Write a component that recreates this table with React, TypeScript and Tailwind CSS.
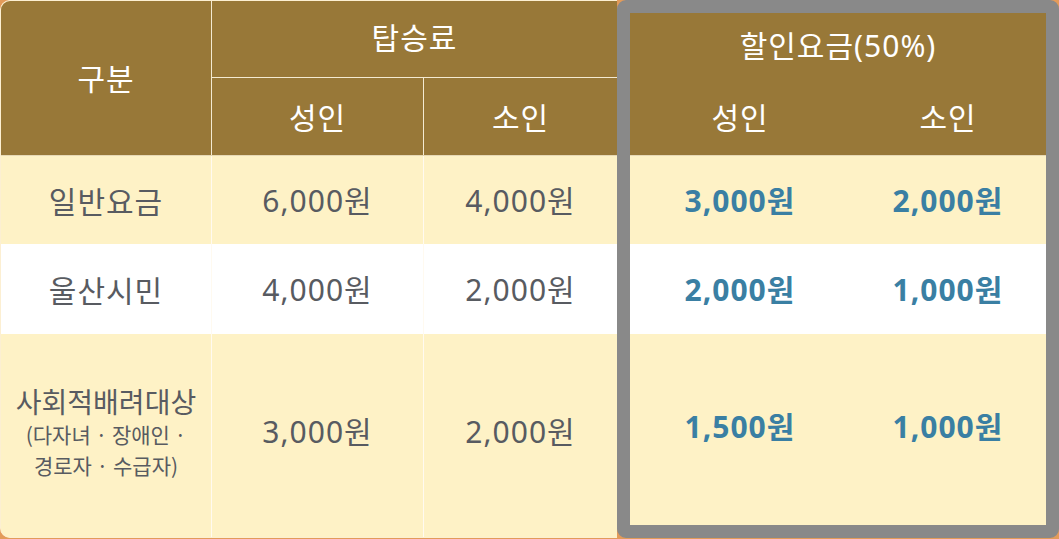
import React from "react";

const font = { fontFamily: '"Noto Sans CJK KR", "Noto Sans", sans-serif' };
const num = { fontFamily: '"Noto Sans", "Noto Sans CJK KR", sans-serif' };

export default function App() {
  return (
    <div className="w-[1059px] h-[539px] bg-[#e39b5a] flex" style={font}>
      {/* left part */}
      <div className="w-[617px] h-[538px] flex flex-col rounded-tl-[10px] rounded-bl-[10px] overflow-hidden border-l border-t border-b border-[#fcefd2] bg-[#fef2c6]">
        {/* header */}
        <div className="flex h-[155px] bg-[#987838] text-white text-[30px] tracking-[1px] border-b border-[#e7d9b5]">
          <div className="w-[211px] border-r border-[#f4ead2] flex items-center justify-center pb-[2px]">구분</div>
          <div className="flex-1 flex flex-col">
            <div className="h-[77px] border-b border-[#f4ead2] flex items-center justify-center pb-[6px]">탑승료</div>
            <div className="flex-1 flex">
              <div className="w-[212px] border-r border-[#f4ead2] flex items-center justify-center">성인</div>
              <div className="flex-1 flex items-center justify-center">소인</div>
            </div>
          </div>
        </div>
        {/* rows */}
        <div className="flex h-[88px] bg-[#fef2c6] text-[#585b61] text-[30px] tracking-[1px]">
          <div className="w-[211px] border-r border-[#fffaf0] flex items-center justify-center">일반요금</div>
          <div className="w-[212px] border-r border-[#fffaf0] flex items-center justify-center" style={num}>6,000원</div>
          <div className="flex-1 flex items-center justify-center" style={num}>4,000원</div>
        </div>
        <div className="flex h-[90px] bg-white text-[#585b61] text-[30px] tracking-[1px]">
          <div className="w-[211px] border-r border-[#fffaf0] flex items-center justify-center">울산시민</div>
          <div className="w-[212px] border-r border-[#fffaf0] flex items-center justify-center" style={num}>4,000원</div>
          <div className="flex-1 flex items-center justify-center" style={num}>2,000원</div>
        </div>
        <div className="flex flex-1 bg-[#fef2c6] text-[#585b61] text-[30px] tracking-[1px]">
          <div className="w-[211px] border-r border-[#fffaf0] flex flex-col items-center justify-center pb-[8px] tracking-normal">
            <div className="text-[28px] leading-[35px]">사회적배려대상</div>
            <div className="text-[21px] leading-[31px]">(다자녀 · 장애인 ·</div>
            <div className="text-[21px] leading-[30px]">경로자 · 수급자)</div>
          </div>
          <div className="w-[212px] border-r border-[#fffaf0] flex items-center justify-center pb-[8px]" style={num}>3,000원</div>
          <div className="flex-1 flex items-center justify-center pb-[8px]" style={num}>2,000원</div>
        </div>
      </div>
      {/* right highlighted part */}
      <div className="w-[442px] h-[538px] border-[13px] border-[#898989] rounded-[9px] flex flex-col overflow-hidden bg-[#fef2c6]">
        <div className="h-[143px] bg-[#987838] text-white text-[30px] tracking-[1px] border-b border-[#e7d9b5] flex flex-col">
          <div className="h-[64px] flex items-center justify-center" style={num}>할인요금(50%)</div>
          <div className="flex-1 flex">
            <div className="w-[220px] flex items-center justify-center">성인</div>
            <div className="flex-1 flex items-center justify-center">소인</div>
          </div>
        </div>
        <div className="flex h-[88px] bg-[#fef2c6] text-[#3a7fa3] font-bold text-[30px] tracking-[1px]" style={num}>
          <div className="w-[220px] flex items-center justify-center">3,000원</div>
          <div className="flex-1 flex items-center justify-center">2,000원</div>
        </div>
        <div className="flex h-[90px] bg-white text-[#3a7fa3] font-bold text-[30px] tracking-[1px]" style={num}>
          <div className="w-[220px] flex items-center justify-center">2,000원</div>
          <div className="flex-1 flex items-center justify-center">1,000원</div>
        </div>
        <div className="flex flex-1 bg-[#fef2c6] text-[#3a7fa3] font-bold text-[30px] tracking-[1px]" style={num}>
          <div className="w-[220px] flex items-center justify-center pb-[6px]">1,500원</div>
          <div className="flex-1 flex items-center justify-center pb-[6px]">1,000원</div>
        </div>
      </div>
    </div>
  );
}
